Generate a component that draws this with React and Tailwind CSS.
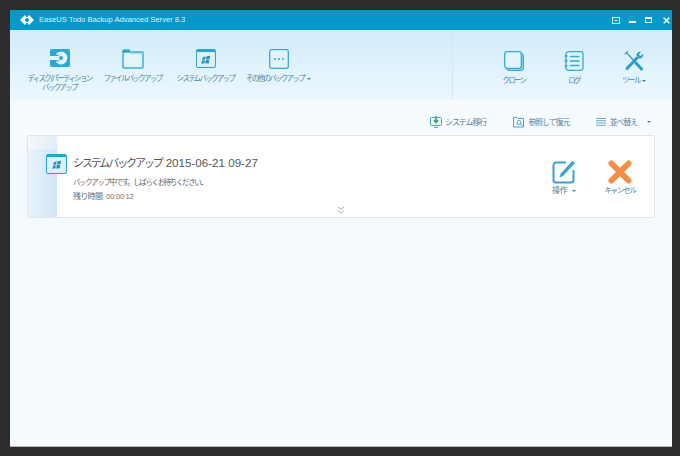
// App.jsx
const jp = { fontFamily: '"Noto Sans CJK JP", "Liberation Sans", sans-serif' };
const latin = { fontFamily: '"Liberation Sans", sans-serif' };

function Caret({ className }) {
  return <span className={`inline-block align-middle border-x-[2px] border-t-[2px] border-x-transparent border-t-[#4d7f99] ${className}`} />;
}

function WinLogo({ className }) {
  return (
    <svg viewBox="0 0 12 12" className={className}>
      <path d="M2.2 2.6 5.6 1.8 4.9 5.4 1.4 6zM6.6 1.6 11 .8 10.2 4.8 5.9 5.3zM1.2 6.8 4.8 6.2 4.1 9.8.5 10.4zM5.7 6.1 10 5.6 9.2 9.8 5 10.2z" fill="#2b8fb8" />
    </svg>
  );
}

function DiskIcon() {
  return (
    <svg viewBox="0 0 20 18" className="w-5 h-[18px]">
      <rect width="20" height="18" rx="2" fill="#2aa8d6" />
      <circle cx="11" cy="9" r="6.4" fill="#e6f6fc" />
      <rect x="0" y="5.6" width="11" height="6.8" fill="#2aa8d6" />
      <rect x="0" y="7" width="11" height="4" fill="#e6f6fc" />
      <circle cx="11" cy="9" r="3.4" fill="#e6f6fc" />
      <circle cx="11" cy="9" r="2" fill="#2aa8d6" />
    </svg>
  );
}

function FolderIcon() {
  return (
    <svg viewBox="0 0 22 20" className="w-[22px] h-5" fill="none">
      <path d="M1 3V18a1 1 0 0 0 1 1H20a1 1 0 0 0 1-1V4a1 1 0 0 0-1-1H8L7 1H2a1 1 0 0 0-1 1z" stroke="#3ab0d8" strokeWidth="1.5" fill="#e4f4fb" />
      <path d="M1 2.5H7.5" stroke="#2390bb" strokeWidth="2" />
      <path d="M8 4.5H20.5" stroke="#a5dbee" strokeWidth="1" />
    </svg>
  );
}

function SystemIcon({ className }) {
  return (
    <div className={`relative rounded-[2px] border-[1.5px] border-[#2aa5d2] bg-[#dcf1f9] flex items-center justify-center ${className}`}>
      <div className="absolute top-0 inset-x-0 h-[2px] bg-[#2aa5d2]" />
      <WinLogo className="w-[10px] h-[10px] mt-0.5" />
    </div>
  );
}

function MoreIcon() {
  return (
    <svg viewBox="0 0 20 20" className="w-5 h-5" fill="none">
      <rect x=".7" y=".7" width="18.6" height="18.6" rx="2" stroke="#35a9d3" strokeWidth="1.3" fill="#e4f4fb" />
      <circle cx="6" cy="10" r="1" fill="#35a9d3" />
      <circle cx="10" cy="10" r="1" fill="#35a9d3" />
      <circle cx="14" cy="10" r="1" fill="#35a9d3" />
    </svg>
  );
}

function CloneIcon() {
  return (
    <svg viewBox="0 0 20 20" className="w-5 h-5" fill="none">
      <rect x="2.5" y="2.5" width="17" height="17" rx="2.5" fill="#7fd0ea" stroke="#35a9d3" />
      <rect x=".7" y=".7" width="16.6" height="16.6" rx="2.5" fill="#e2f4fb" stroke="#35a9d3" strokeWidth="1.3" />
    </svg>
  );
}

function LogIcon() {
  return (
    <svg viewBox="0 0 20 20" className="w-5 h-5" fill="none" stroke="#35a9d3">
      <rect x="2" y=".7" width="17" height="18.6" rx="2.5" strokeWidth="1.3" fill="#e2f4fb" />
      <path d="M6 5.5H15.5M6 10H15.5M6 14.5H15.5" strokeWidth="1.3" />
      <path d="M.5 5H3.5M.5 10H3.5M.5 15H3.5" strokeWidth="1.3" />
    </svg>
  );
}

function ToolIcon() {
  return (
    <svg viewBox="0 0 20 20" className="w-5 h-5" fill="none">
      <path d="M2 1 11 11" stroke="#4a9cc0" strokeWidth="1.4" />
      <path d="M.5 3.2 4 .4" stroke="#4a9cc0" strokeWidth="1.2" />
      <path d="M12 12 17.5 18" stroke="#2f9cc8" strokeWidth="3" strokeLinecap="round" />
      <path d="M3 17.5 13 7" stroke="#2f9cc8" strokeWidth="3" strokeLinecap="round" />
      <path d="M12.5 4.5A3.7 3.7 0 0 1 17 .8L14.8 3.4 16.4 5 19 2.8A3.7 3.7 0 0 1 14.8 7.5z" fill="#2f9cc8" />
    </svg>
  );
}

function ToolItem({ icon, label, className }) {
  return (
    <div className={`flex flex-col items-center ${className}`}>
      <div className="h-5 flex items-start">{icon}</div>
      <div className="mt-[4px] text-[7.5px] leading-[9px] tracking-[-1.7px] text-[#5285a0] text-center whitespace-nowrap" style={jp}>
        {label}
      </div>
    </div>
  );
}

function SubAction({ icon, label, className }) {
  return (
    <div className={`flex items-center gap-[3px] text-[8px] tracking-[-1.1px] text-[#5a8097] whitespace-nowrap ${className}`} style={jp}>
      {icon}
      {label}
    </div>
  );
}

export default function App() {
  return (
    <div className="w-[680px] h-[456px] bg-[#2d2d2d] pt-2.5 pl-2.5 pr-2 pb-[9px] overflow-hidden">
      <div className="h-full flex flex-col bg-[#f5fbff] border-b border-[#b5b5b5]">
        {/* title bar */}
        <div className="h-5 shrink-0 bg-[#0798ca] flex items-center pl-[10px] pr-[2px]">
          <svg viewBox="0 0 14 10" className="w-[14px] h-[10px]">
            <path d="M5 0 0 5 5 10 7 7.6 4.6 5 7 2.4z" fill="#fff" />
            <path d="M9 0 14 5 9 10 7 7.6 9.4 5 7 2.4z" fill="#fff" />
          </svg>
          <span className="ml-[5px] text-[7.6px] text-[#dff4fb]" style={latin}>
            EaseUS Todo Backup Advanced Server 8.3
          </span>
          <div className="ml-auto flex items-center">
            <svg viewBox="0 0 8 7" className="w-2 h-[7px]" fill="none" stroke="#dff4fb">
              <rect x=".5" y=".5" width="7" height="6" />
              <path d="M2.5 3.5H5.5" />
            </svg>
            <div className="ml-[9px] w-[7px] h-[2px] mt-1 bg-white" />
            <div className="ml-[9px] w-[7px] h-[6px] border border-t-2 border-white" />
            <svg viewBox="0 0 8 8" className="ml-[11px] w-[7px] h-[7px]" stroke="#fff" strokeWidth="1.8">
              <path d="M.8.8 7.2 7.2M7.2.8.8 7.2" />
            </svg>
          </div>
        </div>

        {/* toolbar */}
        <div className="h-[70px] shrink-0 flex bg-gradient-to-b from-[#d2ecfb] to-[#ecf8fe]">
          <div className="flex-1 flex pt-[19px] pl-[13px]">
            <ToolItem icon={<DiskIcon />} label={<>ディスク/パーティション<br />バックアップ</>} className="w-[73px]" />
            <ToolItem icon={<FolderIcon />} label="ファイルバックアップ" className="w-[73px]" />
            <ToolItem icon={<SystemIcon className="w-5 h-[19px]" />} label="システムバックアップ" className="w-[73px]" />
            <ToolItem icon={<MoreIcon />} label={<>その他のバックアップ<Caret className="ml-[3px]" /></>} className="w-[73px]" />
          </div>
          <div className="w-[220px] shrink-0 flex border-l border-[#d3e6f1] pt-[21px] pl-[31px]">
            <ToolItem icon={<CloneIcon />} label="クローン" className="w-[60px]" />
            <ToolItem icon={<LogIcon />} label="ログ" className="w-[60px]" />
            <ToolItem icon={<ToolIcon />} label={<>ツール<Caret className="ml-[2px]" /></>} className="w-[60px]" />
          </div>
        </div>

        {/* content */}
        <div className="flex-1 px-[17px]">
          <div className="h-[35px] pt-[8px] flex items-center justify-end pr-[4px]">
            <SubAction
              icon={
                <svg viewBox="0 0 12 12" className="w-3 h-3" fill="none">
                  <rect x=".5" y="1.5" width="11" height="8" rx="1" stroke="#4aa5c9" fill="#e8f6fb" />
                  <path d="M4 11.5H8" stroke="#4aa5c9" />
                  <path d="M6 0V6M4 4 6 6.5 8 4" stroke="#3aa648" strokeWidth="1.5" />
                </svg>
              }
              label="システム移行"
            />
            <SubAction
              icon={
                <svg viewBox="0 0 12 12" className="w-3 h-3" fill="none" stroke="#4aa5c9">
                  <path d="M.5 11V1.5H4L5 2.5H10.5V11z" />
                  <circle cx="6" cy="6.5" r="2" />
                  <path d="M7.5 8 9.5 10" />
                </svg>
              }
              label="参照して復元"
              className="ml-[27px]"
            />
            <SubAction
              icon={
                <svg viewBox="0 0 10 8" className="w-[10px] h-2" stroke="#5ba3c4" strokeWidth=".9">
                  <path d="M0 .5H10M0 2.7H10M0 5H10M0 7.3H10" />
                </svg>
              }
              label={<span>並べ替え<Caret className="ml-[10px]" /></span>}
              className="ml-[27px]"
            />
          </div>

          {/* backup card */}
          <div className="h-[83px] flex bg-white border border-[#dfe5e9] rounded-[2px]">
            <div className="w-[29px] shrink-0 flex flex-col">
              <div className="h-[13px] bg-gradient-to-r from-[#f3f8fd] to-[#dfeefa]" />
              <div className="flex-1 bg-gradient-to-r from-[#eaf4fd] to-[#cfe5f8]" />
            </div>
            <div className="flex-1 relative pl-[16px] pt-[17px]">
              <div className="text-[12px] leading-[18px] text-[#555] whitespace-nowrap" style={jp}>
                <span className="text-[11px] tracking-[-2.1px]">システムバックアップ</span>
                <span className="ml-[4px] text-[11.6px]" style={latin}>2015-06-21 09-27</span>
              </div>
              <div className="mt-[4px] text-[7.5px] leading-[12px] tracking-[-1.4px] text-[#666]" style={jp}>
                バックアップ中です。しばらくお待ちください...
              </div>
              <div className="mt-[2px] text-[8px] leading-[12px] tracking-[-0.7px] text-[#666]" style={jp}>
                残り時間 <span className="ml-[3px] text-[7px] tracking-normal" style={latin}>00:00:12</span>
              </div>
              <div className="absolute -left-[11px] top-[18px]">
                <SystemIcon className="w-[21px] h-[20px]" />
              </div>
              <svg viewBox="0 0 8 8" className="absolute left-[280px] bottom-[3px] w-2 h-2" fill="none" stroke="#9fb3bf">
                <path d="M1 1 4 3.5 7 1M1 4.5 4 7 7 4.5" />
              </svg>
            </div>
            <div className="w-[112px] shrink-0 flex pt-[24px] pl-[2px]">
              <div className="w-[40px] flex flex-col items-center">
                <svg viewBox="0 0 24 24" className="w-6 h-6" fill="none">
                  <path d="M14 2.5H4A2.5 2.5 0 0 0 1.5 5V20A2.5 2.5 0 0 0 4 22.5H19A2.5 2.5 0 0 0 21.5 20V10" stroke="#3aa0d5" strokeWidth="2" />
                  <path d="M20.5 .8 23 3 11 16 7.5 17.5 8.8 13.5z" fill="#3aa0d5" />
                </svg>
                <div className="mt-[1px] text-[8px] leading-[10px] tracking-[-0.5px] text-[#4d7f99] whitespace-nowrap" style={jp}>操作<Caret className="ml-[5px]" /></div>
              </div>
              <div className="ml-[16px] w-[40px] flex flex-col items-center">
                <svg viewBox="0 0 24 24" className="w-6 h-6">
                  <path d="M3.5 3.5 20.5 20.5M20.5 3.5 3.5 20.5" stroke="#f58e45" strokeWidth="6" strokeLinecap="round" />
                </svg>
                <div className="mt-[1px] text-[7.5px] leading-[10px] tracking-[-1.2px] text-[#4d7f99] whitespace-nowrap" style={jp}>キャンセル</div>
              </div>
            </div>
          </div>
        </div>
      </div>
    </div>
  );
}
